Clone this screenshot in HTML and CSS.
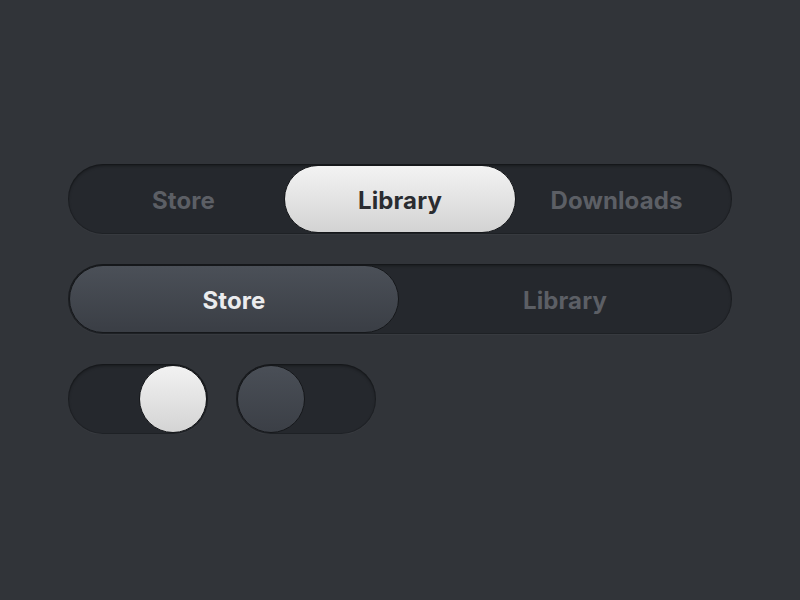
FILE: index.html
```html
<!DOCTYPE html>
<html lang="en">

<head>
    <meta charset="utf-8">
    <title>Segmented controls</title>
    <link rel="stylesheet" href="styles.css">
</head>

<body>
    <div class="page">
        <!-- 三段切换 -->
        <div class="track tabs3">
            <div class="seg seg-left">Store</div>
            <div class="seg pill pill-light">Library</div>
            <div class="seg seg-right">Downloads</div>
        </div>
        <!-- 两段切换 -->
        <div class="track tabs2">
            <div class="seg pill pill-dark">Store</div>
            <div class="seg">Library</div>
        </div>
        <!-- 开关 -->
        <div class="switches">
            <div class="track switch on">
                <span class="knob knob-light"></span>
            </div>
            <div class="track switch">
                <span class="knob knob-dark"></span>
            </div>
        </div>
    </div>
</body>

</html>
```

FILE: styles.css
```css
/* reset */

html,
body {
    margin: 0;
    padding: 0;
}

body {
    background: #313439;
    font-family: Inter, "Noto Sans", sans-serif;
    font-weight: 700;
}

.page {
    display: flex;
    flex-direction: column;
    gap: 30px;
    padding: 164px 68px 0;
}

/* 槽 */

.track {
    box-sizing: border-box;
    height: 70px;
    padding: 1px;
    border-radius: 35px;
    background: #25282d;
    box-shadow: inset 0 2px 3px rgba(0, 0, 0, 0.35), inset 0 0 0 1px rgba(0, 0, 0, 0.15), 0 1px 0 rgba(255, 255, 255, 0.03);
}

.tabs3 {
    display: grid;
    grid-template-columns: 1fr 232px 1fr;
    width: 664px;
}

.tabs2 {
    display: grid;
    grid-template-columns: 330px 1fr;
    width: 664px;
}

.seg {
    box-sizing: border-box;
    display: flex;
    align-items: center;
    justify-content: center;
    height: 68px;
    padding-top: 3px;
    font-size: 24px;
    color: #5c5f65;
    letter-spacing: 0.1px;
}

.seg-left {
    padding-left: 14px;
}

.seg-right {
    padding-right: 14px;
}

/* 选中块 */

.pill {
    border-radius: 34px;
    border: 1px solid #16181b;
}

.pill-light {
    background: linear-gradient(#f3f3f3, #d3d3d3);
    color: #2a2c30;
}

.pill-dark {
    background: linear-gradient(#4b5058, #3a3e45);
    color: #ebecee;
}

/* 开关 */

.switches {
    display: flex;
    gap: 28px;
}

.switch {
    display: flex;
    width: 140px;
}

.switch.on {
    justify-content: flex-end;
}

.knob {
    box-sizing: border-box;
    width: 68px;
    height: 68px;
    border-radius: 50%;
    border: 1px solid #16181b;
}

.knob-light {
    background: linear-gradient(#f2f2f2, #d4d4d4);
}

.knob-dark {
    background: linear-gradient(#4a4f57, #3b3f46);
}
```
